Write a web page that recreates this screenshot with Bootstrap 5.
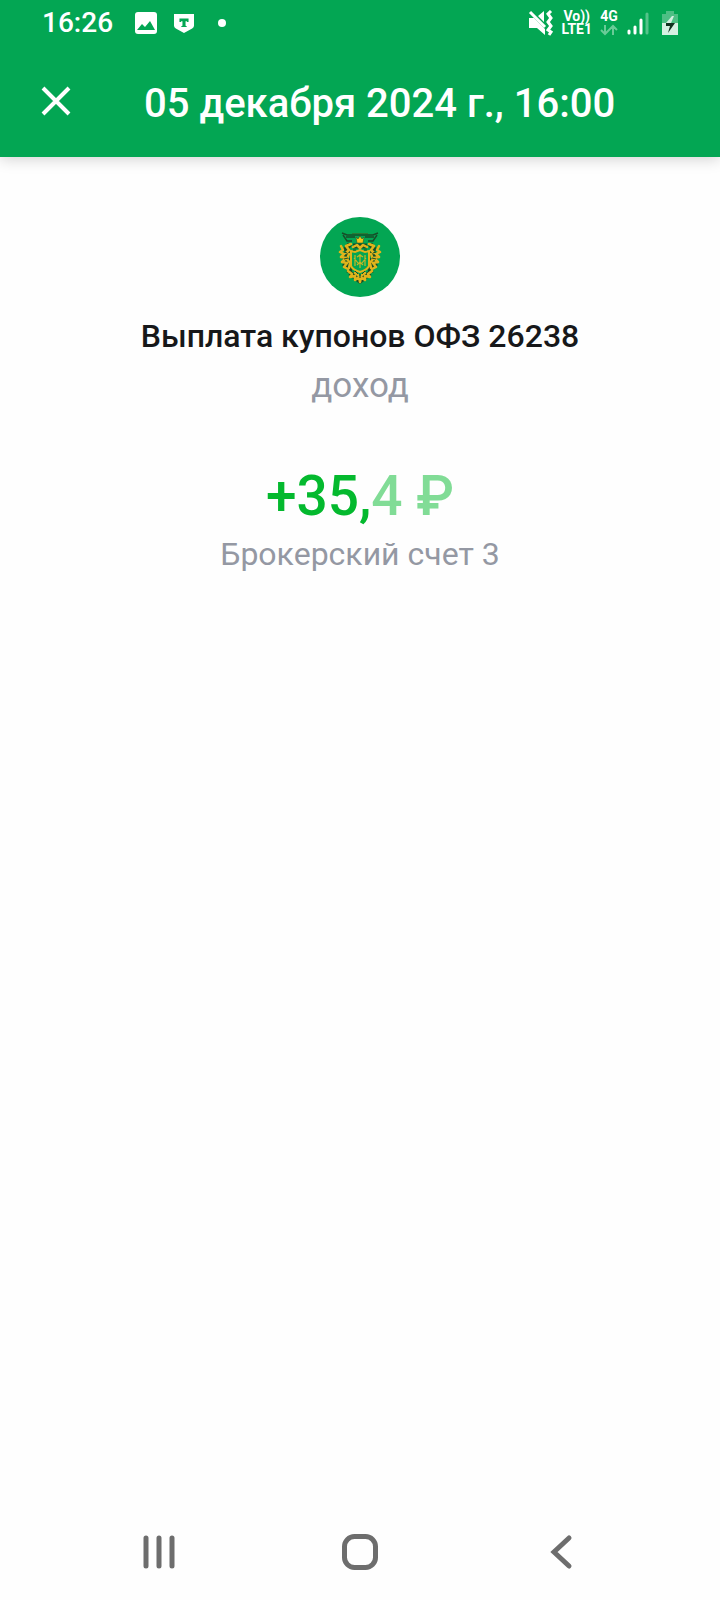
<!DOCTYPE html>
<html lang="ru">
<head>
<meta charset="utf-8">
<meta name="viewport" content="width=device-width, initial-scale=1">
<title>Выплата купонов</title>
<link href="https://cdn.jsdelivr.net/npm/bootstrap@5.3.0/dist/css/bootstrap.min.css" rel="stylesheet">
<style>
  body { font-family: Roboto, "Liberation Sans", sans-serif; color: #17181a; background: #fefefe; }
  svg { display: block; flex: none; }
  .app-head { background: #03a653; color: #fff; box-shadow: 0 2px 14px rgba(0,0,0,.18); }
  .status { height: 46px; padding: 0 42px; }
  .clock { font-size: 28px; line-height: 32px; font-weight: 500; width: 92px; }
  .tiny { font-size: 14px; line-height: 13px; font-weight: 700; }
  .title-bar { height: 111px; padding: 0 28px; }
  .title-bar h1 { font-size: 40px; line-height: 48px; font-weight: 500; margin: 4px 0 0 60px; }
  .icon-btn { background: none; border: 0; padding: 0; color: inherit; }
  .operation { padding-top: 60px; }
  .op-name { font-size: 32px; line-height: 40px; font-weight: 500; margin: 19px 0 0; }
  .op-kind { font-size: 35px; line-height: 48px; color: #9498a3; margin: 6px 0 0; }
  .op-sum { font-size: 55px; line-height: 64px; font-weight: 500; color: #04b92e; margin: 54px 0 0; }
  .op-sum span { color: #81dc96; }
  .op-account { font-size: 32px; line-height: 40px; color: #9498a3; margin: 6px 0 0; }
  .sys-nav { height: 96px; padding: 0 58px; color: #6d6d6d; }
</style>
</head>
<body class="d-flex flex-column min-vh-100">
<header class="app-head">
  <div class="status d-flex align-items-center justify-content-between">
    <div class="d-flex align-items-center">
      <span class="clock">16:26</span>
      <svg width="24" height="24" viewBox="0 0 24 24" aria-hidden="true"><rect x="1" y="1" width="22" height="22" rx="3" fill="#fff"/><path d="M3 19l5-6 3 3 5-6 5 9z" fill="#03a653"/></svg>
      <svg class="ms-3" width="20" height="24" viewBox="0 0 22 24" aria-hidden="true"><path d="M0 2h22v13q0 2-2 3l-9 5-9-5q-2-1-2-3z" fill="#fff"/><path d="M6 7h10v4h-1.500l-.5-1h-1.300v5l1.300.5v1h-6v-1l1.300-.5v-5H8l-.5 1H6z" fill="#03a653"/></svg>
      <svg class="ms-4" width="8" height="8" viewBox="0 0 8 8" aria-hidden="true"><circle cx="4" cy="4" r="4" fill="#fff"/></svg>
    </div>
    <div class="d-flex align-items-center gap-2">
      <svg width="26" height="26" viewBox="0 0 26 26" aria-hidden="true"><path d="M2 8h5l11 11v6l-8-7H2zM11 6l6-5v11z" fill="#fff"/><path d="M3 2l15 15" stroke="#fff" stroke-width="3"/><path d="M24 1l-3 3 3 4-3 4 3 4-3 4 3 2-2 3" fill="none" stroke="#fff" stroke-width="3"/></svg>
      <div class="tiny text-center">Vo))<br>LTE1</div>
      <div class="tiny text-center">4G
        <svg width="18" height="13" viewBox="0 0 18 13" fill="none" stroke="#69cb97" stroke-width="2" aria-hidden="true"><path d="M5 2v8M1 7l4 4 4-4M13 12V4M9 7l4-4 4 4"/></svg>
      </div>
      <svg width="24" height="24" viewBox="0 0 24 24" stroke-width="3" stroke-linecap="round" aria-hidden="true"><path d="M3 20v2M9 16v6M15 9v13" stroke="#fff"/><path d="M21 3v19" stroke="#55c38a"/></svg>
      <svg class="ms-1" width="16" height="26" viewBox="0 0 16 26" aria-hidden="true"><path d="M4 1h8v3h4v9H0V4h4z" fill="#4dbf84"/><path d="M0 13h16v12H0z" fill="#d5f1e2"/><path d="M10 6L4 13h5l3-7z" fill="#d5f1e2"/><path d="M4 13h9L6 23l2-7H4z" fill="#10331f"/></svg>
    </div>
  </div>
  <div class="title-bar d-flex align-items-center">
    <button type="button" class="icon-btn" aria-label="Закрыть">
      <svg width="56" height="56" viewBox="0 0 56 56" fill="none" stroke="currentColor" stroke-width="4"><path d="M15 14l26 26M41 14L15 40"/></svg>
    </button>
    <h1>05 декабря 2024 г., 16:00</h1>
  </div>
</header>
<main class="operation flex-grow-1 d-flex flex-column align-items-center text-center">
  <svg width="80" height="80" viewBox="0 0 80 80" role="img" aria-label="Министерство финансов">
    <circle cx="40" cy="40" r="40" fill="#03a653"/>
    <g fill="none" stroke="#174d28" stroke-width="1.500">
      <path d="M22 16l5 2h26l5-2"/>
      <path d="M26 20h9M45 20h9M23 18l4 6h5M57 18l-4 6h-5"/>
      <path d="M32 16.500h16" stroke="#2c7a35" stroke-width="1"/>
    </g>
    <g fill="none" stroke="#174d28" stroke-width="5" stroke-linejoin="round">
      <path d="M30 27l-4 5 4 4-6 4 5 4-4 4 5 3-1 5M50 27l4 5-4 4 6 4-5 4 4 4-5 3 1 5"/>
      <path d="M33 29h14M30 56l5 4 5 2 5-2 5-4M35 60l5 4 5-4"/>
    </g>
    <g fill="none" stroke="#e0b41c" stroke-width="2.500" stroke-linejoin="round" stroke-linecap="round">
      <path d="M31 27l-5 2 3 4-3 3M49 27l5 2-3 4 3 3M21 29l2 4-3 2 4 2-3 3 5 1-4 4 5 1-3 4 4 2M59 29l-2 4 3 2-4 2 3 3-5 1 4 4-5 1 3 4-4 2"/>
      <path d="M33 30l4-2 3 3 3-3 4 2M29 37l-2 5 3 4-1 5M51 37l2 5-3 4 1 5"/>
      <path d="M28 54l4 3-2 3 5-1v4l4-3 1 5 1-5 4 3v-4l5 1-2-3 4-3M35 56l3 2M45 56l-3 2"/>
    </g>
    <path d="M36 20l2 2 2-3 2 3 2-2-1 6h-6z" fill="#f3c51a" stroke="#174d28" stroke-width=".5"/>
    <path d="M31 34l4 1 5-2 5 2 4-1v15q-2 4-9 6-7-2-9-6z" fill="#03a653" stroke="#e0b41c" stroke-width="2"/>
    <path d="M35 38v11M45 38v11M34 41l4 5M46 41l-4 5M40 37v14M37 40l3-2 3 2M37 48l3-3 3 3" fill="none" stroke="#c7b724" stroke-width="1.200"/>
    <path d="M24 35l3 1M24 42l4-1M56 35l-3 1M56 42l-4-1M33 33h3M44 33h3M35 54l3 3M45 54l-3 3M40 57v4" fill="none" stroke="#174d28" stroke-width="1"/>
  </svg>
  <h2 class="op-name">Выплата купонов ОФЗ 26238</h2>
  <p class="op-kind">доход</p>
  <p class="op-sum">+35,<span>4 ₽</span></p>
  <p class="op-account">Брокерский счет 3</p>
</main>
<nav class="sys-nav row g-0 align-items-center" aria-label="Системная навигация">
  <div class="col d-flex justify-content-center"><button type="button" class="icon-btn" aria-label="Недавние"><svg width="40" height="40" viewBox="0 0 40 40" fill="none" stroke="currentColor" stroke-width="5" stroke-linecap="round"><path d="M7 6v28M20 6v28M33 6v28"/></svg></button></div>
  <div class="col d-flex justify-content-center"><button type="button" class="icon-btn" aria-label="Домой"><svg width="40" height="40" viewBox="0 0 40 40" fill="none" stroke="currentColor" stroke-width="5"><rect x="4.500" y="4.500" width="31" height="31" rx="10"/></svg></button></div>
  <div class="col d-flex justify-content-center"><button type="button" class="icon-btn" aria-label="Назад"><svg width="40" height="40" viewBox="0 0 40 40" fill="none" stroke="currentColor" stroke-width="5" stroke-linecap="round"><path d="M28 6L13 20l15 14"/></svg></button></div>
</nav>
<script src="https://cdn.jsdelivr.net/npm/bootstrap@5.3.0/dist/js/bootstrap.bundle.min.js"></script>
</body>
</html>
